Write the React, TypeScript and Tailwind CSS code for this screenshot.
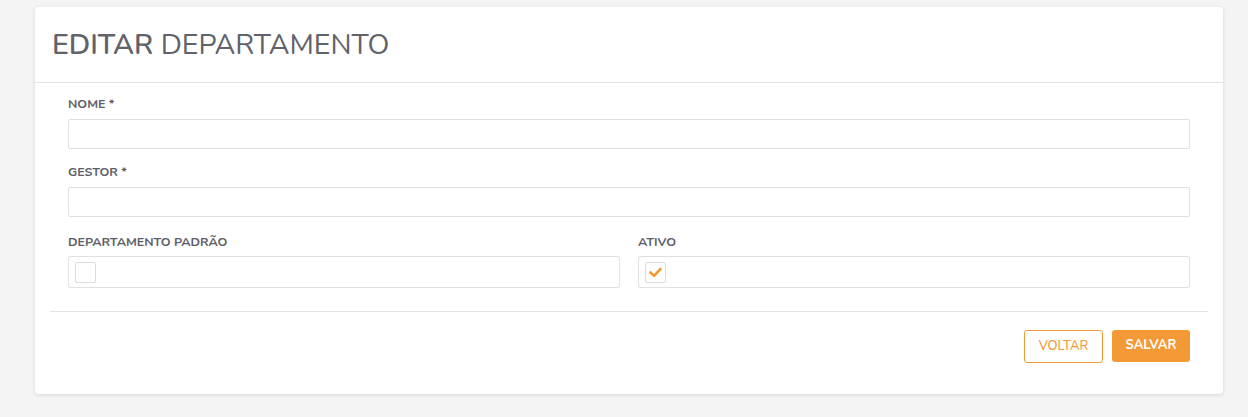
import { useState } from 'react';

const font = { fontFamily: 'Nunito, Lato, "Open Sans", sans-serif' };

function Field({ label, className = '' }: { label: string; className?: string }) {
  return (
    <div className={`flex flex-col ${className}`}>
      <label className="text-[12.5px] font-bold text-[#5e5e66] leading-[15px] mb-[8px]">{label}</label>
      <input className="h-[30px] w-full border border-[#e0e0e0] rounded-[2px] bg-white outline-none px-2 text-sm" />
    </div>
  );
}

function CheckField({ label, checked, onToggle }: { label: string; checked: boolean; onToggle: () => void }) {
  return (
    <div className="flex flex-col">
      <label className="text-[12.5px] font-bold text-[#5e5e66] leading-[15px] mb-[7px]">{label}</label>
      <div className="h-[32px] w-full border border-[#e0e0e0] rounded-[2px] bg-white flex items-center px-[6px]">
        <button
          onClick={onToggle}
          className="w-[21px] h-[21px] border border-[#dcdcdc] rounded-[2px] bg-white flex items-center justify-center"
        >
          {checked && (
            <svg width="13" height="11" viewBox="0 0 13 11">
              <path d="M1.5 5.5 L5 8.8 L11.5 2" fill="none" stroke="#f39a36" strokeWidth="2.6" strokeLinecap="round" strokeLinejoin="round" />
            </svg>
          )}
        </button>
      </div>
    </div>
  );
}

export default function App() {
  const [padrao, setPadrao] = useState(false);
  const [ativo, setAtivo] = useState(true);
  return (
    <div className="min-h-[417px] bg-[#f4f4f4] pt-[7px] pb-[23px]" style={font}>
      <div className="ml-[35px] mr-[25px] bg-white rounded-[4px] shadow-[0_1px_4px_rgba(0,0,0,0.12)]">
        {/* Header */}
        <div className="h-[76px] border-b border-[#e3e3e3] flex items-center pl-[17px]">
          <h1 className="text-[28.5px] text-[#62626a] leading-none mt-[1px]">
            <span className="font-semibold">EDITAR</span> DEPARTAMENTO
          </h1>
        </div>

        {/* Form */}
        <div className="px-[15px]">
          <div className="px-[18px] pt-[13px] pb-[23px] flex flex-col">
            <Field label="NOME *" />
            <Field label="GESTOR *" className="mt-[15px]" />
            <div className="grid grid-cols-2 gap-[18px] mt-[17px]">
              <CheckField label="DEPARTAMENTO PADRÃO" checked={padrao} onToggle={() => setPadrao(!padrao)} />
              <CheckField label="ATIVO" checked={ativo} onToggle={() => setAtivo(!ativo)} />
            </div>
          </div>
          <div className="border-t border-[#e3e3e3] flex justify-end items-start gap-[9px] px-[18px] pt-[18px] pb-[31px]">
            <button className="h-[33px] w-[79px] border border-[#f39a36] rounded-[3px] text-[#f39a36] text-[13px] font-medium bg-white">
              VOLTAR
            </button>
            <button className="h-[32px] w-[78px] bg-[#f39a36] rounded-[3px] text-white text-[13px] font-bold">
              SALVAR
            </button>
          </div>
        </div>
      </div>
    </div>
  );
}
